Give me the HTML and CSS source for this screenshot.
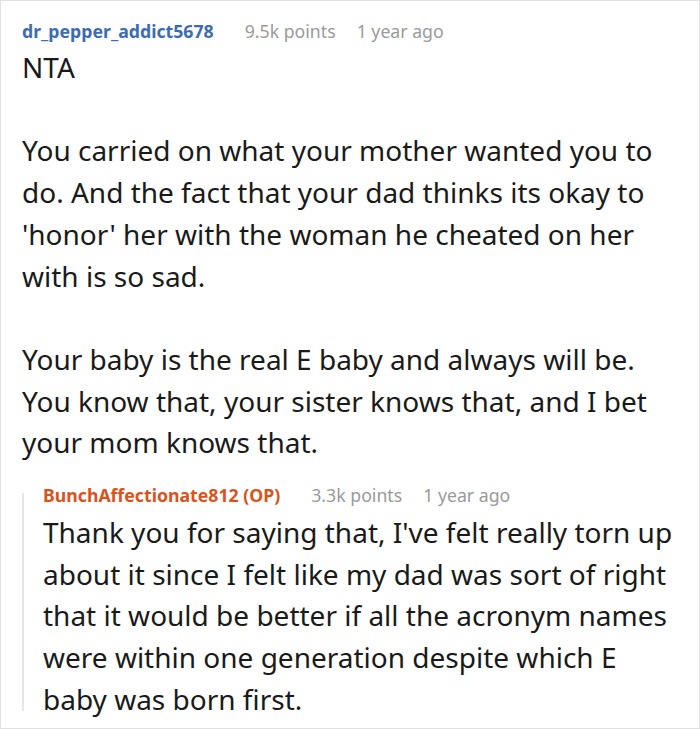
FILE: index.html
```html
<!DOCTYPE html>
<html>
<head>
<meta charset="utf-8">
<link rel="stylesheet" href="styles.css">
</head>
<body>
<div class="card">
  <div class="comment">
    <div class="meta">
      <span class="user">dr_pepper_addict5678</span>
      <span class="info">9.5k points</span>
      <span class="info">1 year ago</span>
    </div>
    <div class="body">
      <p>NTA</p>
      <p>You carried on what your mother wanted you to do. And the fact that your dad thinks its okay to 'honor' her with the woman he cheated on her with is so sad.</p>
      <p>Your baby is the real E baby and always will be. You know that, your sister knows that, and I bet your mom knows that.</p>
    </div>
    <div class="reply">
      <div class="meta">
        <span class="user op">BunchAffectionate812 (OP)</span>
        <span class="info">3.3k points</span>
        <span class="info">1 year ago</span>
      </div>
      <div class="body">
        <p>Thank you for saying that, I've felt really torn up about it since I felt like my dad was sort of right that it would be better if all the acronym names were within one generation despite which E baby was born first.</p>
      </div>
    </div>
  </div>
</div>
</body>
</html>
```
FILE: styles.css
```css
html, body {
  margin: 0;
  padding: 0;
  background: #fff;
}
.card {
  box-sizing: border-box;
  width: 700px;
  height: 729px;
  border: 1px solid #e2e2e2;
  padding: 18px 20px 0 21px;
  font-family: "Noto Sans", "Open Sans", sans-serif;
  color: #1a1a1a;
}
.meta {
  display: flex;
  gap: 21px;
  font-size: 17.7px;
  line-height: 25px;
}
.user {
  color: #3c6cb4;
  font-weight: 700;
  margin-right: 10px;
}
.user.op {
  color: #d9541c;
}
.info {
  color: #9a9a9a;
}
.body {
  font-size: 28px;
  line-height: 41.7px;
}
.body p {
  margin: 0 0 41.7px 0;
}
.body p:last-child {
  margin-bottom: 0;
}
.comment > .body {
  margin-top: 3px;
}
.reply {
  margin-top: 19px;
  padding-left: 21px;
  background: linear-gradient(#e6e6e6, #e6e6e6) no-repeat 0 10px / 2px calc(100% - 20px);
}
.reply .body {
  margin-top: 4px;
}
```
